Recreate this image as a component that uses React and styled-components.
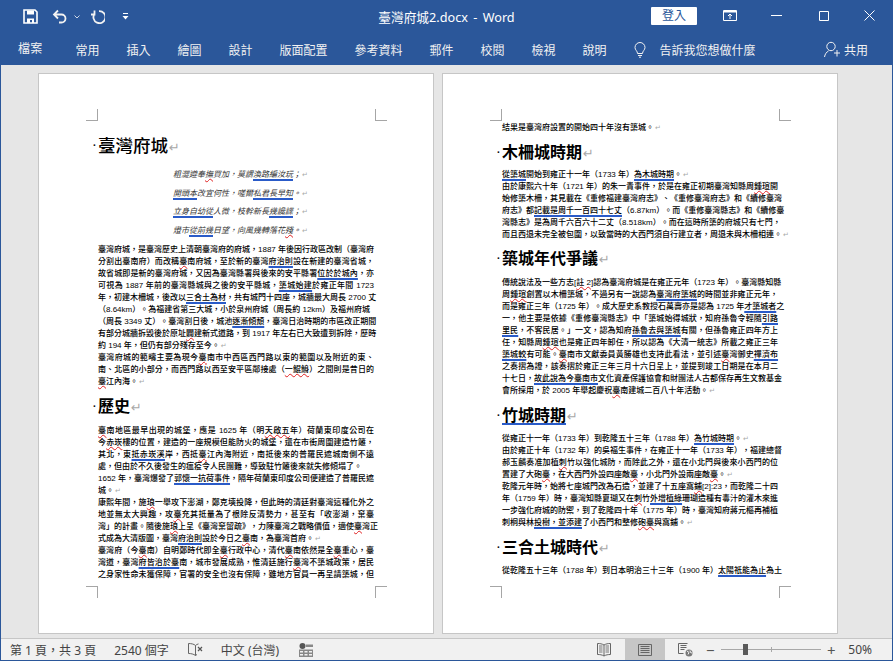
import React from "react";
import styled, { createGlobalStyle } from "styled-components";

const GlobalStyle = createGlobalStyle`
  html, body {
    margin: 0;
    padding: 0;
    height: 100%;
    overflow: hidden;
    background: #e6e6e6;
  }
  * { box-sizing: border-box; }
`;

const Window = styled.div`
  width: 893px;
  height: 661px;
  display: flex;
  flex-direction: column;
  border: 1px solid #2b579a;
  border-top: none;
  font-family: "Noto Sans", "Noto Sans CJK TC", sans-serif;
`;

const TitleBar = styled.div`
  height: 33px;
  background: #2b579a;
  color: #fff;
  display: grid;
  grid-template-columns: 1fr auto 1fr;
  align-items: center;
  margin: 0 -1px 0 -1px;
  padding: 0 1px;
`;

const QuickAccess = styled.div`
  display: flex;
  align-items: center;
  padding-left: 22px;
`;

const QuickIcon = styled.svg`
  display: block;
  flex: none;
  margin-left: ${(p) => p.$gap || 0}px;
`;

const DocTitle = styled.div`
  font-size: 12.7px;
  word-spacing: 2px;
  white-space: pre;
`;

const WindowControls = styled.div`
  display: flex;
  align-items: center;
  justify-content: flex-end;
`;

const SignIn = styled.div`
  width: 46px;
  height: 18px;
  margin: 0 9px 1px 0;
  background: #fff;
  color: #2b579a;
  border-radius: 1px;
  font-size: 12px;
  line-height: 18px;
  text-align: center;
`;

const ControlButton = styled.div`
  width: ${(p) => p.$w || 47}px;
  height: 33px;
  display: flex;
  align-items: center;
  justify-content: center;
  padding-bottom: 2px;
`;

const TabBar = styled.div`
  height: 32px;
  background: #2b579a;
  color: #f2f2f2;
  display: flex;
  align-items: center;
  gap: 27px;
  font-size: 12px;
  margin: 0 -1px;
  padding: 1px 25px 0 18px;
`;

const Tab = styled.div`
  white-space: nowrap;
  margin-right: ${(p) => (p.$file ? 6 : 0)}px;
  margin-top: ${(p) => (p.$file ? -3 : 0)}px;
  letter-spacing: ${(p) => (p.$file ? 0.2 : 0)}px;
`;

const TellMe = styled.div`
  display: flex;
  align-items: center;
  gap: 14px;
  white-space: nowrap;
`;

const Share = styled.div`
  margin-left: auto;
  display: flex;
  align-items: center;
  gap: 4px;
`;

const DocArea = styled.div`
  flex: 1;
  min-height: 0;
  background: #e6e6e6;
  display: flex;
  gap: 8px;
  padding: 8px 0 4px 37px;
  border-bottom: 1px solid #c6c6c6;
`;

const Page = styled.div`
  position: relative;
  width: 396px;
  height: 100%;
  background: #fff;
  border: 1px solid #c6c6c6;
  padding: ${(p) => p.$top}px 0 0 ${(p) => p.$left}px;
`;

const Corner = styled.i`
  position: absolute;
  width: 12px;
  height: 12px;
  ${(p) => (p.$right ? "left: 336px; border-left: 1px solid #a6a6a6;" : "left: 47px; border-right: 1px solid #a6a6a6;")}
  ${(p) =>
    p.$bottom
      ? "top: 512px; border-top: 1px solid #a6a6a6;"
      : "top: 35px; border-bottom: 1px solid #a6a6a6;"}
`;

const Heading = styled.div`
  position: relative;
  height: 24px;
  line-height: 24px;
  margin: ${(p) => p.$mt || 0}px 0 ${(p) => p.$mb || 0}px;
  font-size: ${(p) => (p.$main ? 17.5 : 16)}px;
  font-weight: ${(p) => (p.$main ? 500 : 700)};
  color: #000;
  white-space: nowrap;

  &::before {
    content: "·";
    position: absolute;
    left: -5px;
    font-size: 10px;
    font-weight: 700;
  }
`;

const PoemLine = styled.div`
  height: 18.67px;
  line-height: 18.67px;
  font-size: 8px;
  font-style: italic;
  color: #333;
  white-space: nowrap;
  padding-left: 75px;
  font-family: "Liberation Sans", "Noto Sans CJK TC", sans-serif;
`;

const Line = styled.div`
  width: 276px;
  height: 12px;
  line-height: 12px;
  font-size: 8px;
  font-weight: 500;
  color: #000;
  white-space: nowrap;
  text-align: ${(p) => (p.$end ? "left" : "justify")};
  text-align-last: ${(p) => (p.$end ? "left" : "justify")};
  font-family: "Liberation Sans", "Noto Sans CJK TC", sans-serif;
`;

const Err = styled.span`
  text-decoration: underline wavy #e02020 1px;
  text-underline-offset: 1px;
`;

const Gram = styled.span`
  text-decoration: underline solid #2a5bc8 1.5px;
  text-underline-offset: 1.5px;
`;

const Mark = styled.span`
  color: #a8a8a8;
  font-size: ${(p) => p.$size || 7}px;
  font-family: "DejaVu Sans", sans-serif;
  font-weight: 400;
  margin-left: 1px;
`;

const Gap = styled.div`
  height: ${(p) => p.$h}px;
`;

const StatusBar = styled.div`
  height: 21px;
  background: #f1f1f1;
  display: flex;
  align-items: center;
  color: #444;
  font-size: 12px;
`;

const StatusText = styled.div`
  white-space: pre;
  margin-left: ${(p) => p.$ml}px;
`;

const StatusIcon = styled.svg`
  display: block;
  flex: none;
  margin-left: ${(p) => p.$ml || 0}px;
`;

const ViewGroup = styled.div`
  margin-left: auto;
  display: flex;
  align-items: center;
  height: 100%;
  padding-right: 20px;
`;

const ViewButton = styled.div`
  width: ${(p) => p.$w}px;
  height: 100%;
  display: flex;
  align-items: center;
  justify-content: center;
  background: ${(p) => (p.$on ? "#c6c6c6" : "transparent")};
`;

const ZoomTrack = styled.div`
  position: relative;
  width: 100px;
  height: 1px;
  background: #a8a8a8;
  margin: 0 5px 0 6px;
`;

const ZoomTick = styled.i`
  position: absolute;
  left: 50px;
  top: -2px;
  width: 1px;
  height: 5px;
  background: #a8a8a8;
`;

const ZoomThumb = styled.i`
  position: absolute;
  left: 22px;
  top: -5px;
  width: 5px;
  height: 11px;
  background: #5a5a5a;
`;

const ZoomSign = styled.div`
  width: 10px;
  font-size: 15px;
  line-height: 14px;
  text-align: center;
  color: #555;
`;

const ZoomValue = styled.div`
  margin-left: 12px;
  color: #444;
`;

const App = () => {
  return (
    <>
      <GlobalStyle />
      <Window>
        <TitleBar>
          <QuickAccess>
            <QuickIcon width="15" height="15" viewBox="0 0 15 15" fill="none">
              <path d="M1 1h11l2 2v11H1z" stroke="#fff" strokeWidth="1.6" />
              <path d="M4 1.5h7v4H4z" fill="#fff" />
              <path d="M4 9.5h7V14H9v-3H7v3H4z" fill="#fff" />
            </QuickIcon>
            <QuickIcon $gap={14} width="16" height="16" viewBox="0 0 16 16" fill="none">
              <path d="M6 1.5L2 5.5l4 4M2 5.5h7.5a4 4 0 0 1 0 8H7" stroke="#f2f2f2" strokeWidth="1.8" />
            </QuickIcon>
            <QuickIcon $gap={6} width="6" height="4" viewBox="0 0 6 4" fill="none">
              <path d="M.5.5L3 3 5.500.5" stroke="#cfd8e6" />
            </QuickIcon>
            <QuickIcon $gap={10} width="15" height="15" viewBox="0 0 15 15" fill="none">
              <path d="M4 1.500v4H0.500M4.200 4.500A6 6 0 1 0 8.500 2.200" stroke="#f2f2f2" strokeWidth="1.8" transform="translate(.5 0)" />
            </QuickIcon>
            <QuickIcon $gap={17} width="7" height="7" viewBox="0 0 7 7">
              <path d="M1 0h5v1H1zM.5 3h6L3.500 6.500z" fill="#fff" />
            </QuickIcon>
          </QuickAccess>
          <DocTitle>臺灣府城2.docx - Word</DocTitle>
          <WindowControls>
            <SignIn>登入</SignIn>
            <ControlButton>
              <svg width="14" height="11" viewBox="0 0 14 11" fill="none">
                <path d="M.5.5h13v10H.5z" stroke="#fff" />
                <path d="M1 1h12v1.500H1z" fill="#fff" />
                <path d="M7 9V4.500M5 6l2-2 2 2" stroke="#fff" />
              </svg>
            </ControlButton>
            <ControlButton>
              <svg width="11" height="1" viewBox="0 0 11 1">
                <path d="M0 0h11v1H0z" fill="#fff" />
              </svg>
            </ControlButton>
            <ControlButton>
              <svg width="10" height="10" viewBox="0 0 10 10" fill="none">
                <path d="M.5.5h9v9h-9z" stroke="#fff" />
              </svg>
            </ControlButton>
            <ControlButton $w={45}>
              <svg width="11" height="11" viewBox="0 0 11 11" fill="none">
                <path d="M.5.5l10 10M10.500.5l-10 10" stroke="#fff" />
              </svg>
            </ControlButton>
          </WindowControls>
        </TitleBar>

        <TabBar>
          <Tab $file>檔案</Tab>
          <Tab>常用</Tab>
          <Tab>插入</Tab>
          <Tab>繪圖</Tab>
          <Tab>設計</Tab>
          <Tab>版面配置</Tab>
          <Tab>參考資料</Tab>
          <Tab>郵件</Tab>
          <Tab>校閱</Tab>
          <Tab>檢視</Tab>
          <Tab>說明</Tab>
          <TellMe>
            <svg width="12" height="16" viewBox="0 0 12 16" fill="none">
              <path d="M3.500 11.500C3.500 9 1 8 1 5.500a5 5 0 0 1 10 0C11 8 8.500 9 8.500 11.500zM4 13.500h4M5 15.200h2" stroke="#f2f2f2" />
            </svg>
            告訴我您想做什麼
          </TellMe>
          <Share>
            <svg width="16" height="17" viewBox="0 0 16 17" fill="none">
              <circle cx="7" cy="5.500" r="4.200" stroke="#f2f2f2" />
              <path d="M.5 16c.5-3 2-5 4-6M10 12h6M13 9v6.500" stroke="#f2f2f2" />
            </svg>
            共用
          </Share>
        </TabBar>

        <DocArea>
          <Page $top={59} $left={59}>
            <Corner />
            <Corner $right />
            <Corner $bottom />
            <Corner $bottom $right />
            <Heading $main $mb={9}>臺灣府城<Mark $size={13}>↵</Mark></Heading>
            <PoemLine>粗澀遵奉<Err>撫</Err>買加，莫謂<Gram>渙路編汝玩</Gram>；<Mark>↵</Mark></PoemLine>
            <PoemLine><Gram>開頭本</Gram>改宜何性，嗟爾<Gram>私君長早知</Gram>。<Mark>↵</Mark></PoemLine>
            <PoemLine><Gram>立身自幼從</Gram>人微，枝幹新長<Gram>幾讒諜</Gram>；<Mark>↵</Mark></PoemLine>
            <PoemLine>燈市<Gram>從前幾</Gram>日望，向風幾轉落花<Err>殘</Err>。<Mark>↵</Mark></PoemLine>
            <Gap $h={3.5} />
            <Line>臺灣府城，是臺灣歷史上清朝臺灣府的府城，1887 年後因行政區改制（臺灣府</Line>
            <Line>分割出臺南府）而改稱<Err>臺</Err>南府城，至於新的臺灣<Gram>府治則</Gram>設在新建的臺灣省城，</Line>
            <Line>故省城即是新的臺灣府城，又因為臺灣縣署與後來的安平縣署<Gram>位於於城內</Gram>，亦</Line>
            <Line>可視為 1887 年前的臺灣縣城與之後的安平縣城，<Gram>築城始建</Gram>於雍正年間 1723</Line>
            <Line>年，初建木柵城，後改以<Gram>三合土為材</Gram>，共有城門十四座，城牆最大周長 2700 丈</Line>
            <Line $end>（8.64km）。為福建省第三大城，小於泉州府城（周長約 12km）及福州府城</Line>
            <Line>（周長 3349 丈）。臺灣割日後，城池<Gram>逐漸傾頹</Gram>，臺灣日治時期的市區改正期間</Line>
            <Line>有部分城牆拆毀後於原址<Err>闢</Err>建新式道路，到 1917 年左右已大致遭到拆除，歷時</Line>
            <Line $end>約 194 年，但仍有部分殘存至今。<Mark>↵</Mark></Line>
            <Line>臺灣府城的範疇主要為現今<Err>臺</Err>南市中西區西門路以東的範圍以及附近的東、</Line>
            <Line>南、北區的小部分，而西門路以西至安平區鄰接處（<Err>一鯤鯓</Err>）之間則是昔日的</Line>
            <Line $end><Err>臺</Err>江內海。<Mark>↵</Mark></Line>
            <Heading $mt={6} $mb={7}>歷史<Mark $size={13}>↵</Mark></Heading>
            <Line><Err>臺</Err>南地區最早出現的城堡，應是 1625 年（明<Err>天啟五</Err>年）荷蘭東印度公司在</Line>
            <Line>今<Err>赤崁</Err>樓的位置，建造的一座規模但能防火的城堡，還在市街周圍建造竹籬，</Line>
            <Line>其北，東<Gram>抵赤崁溪</Gram>岸，西抵<Err>臺</Err>江內海附近，南抵後來的普羅民遮城南側不遠</Line>
            <Line $end>處，但由於不久後發生的瘟疫令人民團難，導致駐竹籬後來就失修傾塌了。</Line>
            <Line>1652 年，臺灣爆發了<Gram>郭懷一抗荷事件</Gram>，隔年荷蘭東印度公司便建造了普羅民遮</Line>
            <Line $end>城。<Mark>↵</Mark></Line>
            <Line>康熙年間，施<Err>琅</Err>一舉攻下澎湖，鄭克塽投降，但此時的清廷對臺灣這種化外之</Line>
            <Line>地並無太大興趣，攻<Err>臺</Err>充其抵量為了根除反清勢力，甚至有「收澎湖，棄臺</Line>
            <Line>灣」的計畫。隨後施<Err>琅</Err>上呈《臺灣棄留疏》，力陳臺灣之戰略價值，適使<Err>臺</Err>灣正</Line>
            <Line $end>式成為大清版圖，臺灣<Gram>府治則</Gram>設於今日之<Err>臺</Err>南，為臺灣首府。<Mark>↵</Mark></Line>
            <Line>臺灣府（今<Err>臺</Err>南）自明鄭時代即全<Err>臺</Err>行政中心，清代<Err>臺</Err>南依然是全<Err>臺</Err>重心，臺</Line>
            <Line>灣道，臺灣<Gram>府皆治於臺</Gram>南，城市發展成熟，惟清廷施行<Err>臺</Err>灣不築城政策，居民</Line>
            <Line>之身家性命未獲保障，官署的安全也沒有保障，雖地方官員一再呈請築城，但</Line>
          </Page>

          <Page $top={48} $left={59}>
            <Corner />
            <Corner $right />
            <Corner $bottom />
            <Corner $bottom $right />
            <Line $end>結果是臺灣府設置的開始四十年沒有築城。<Mark>↵</Mark></Line>
            <Heading $mt={6} $mb={5}>木柵城時期<Mark $size={13}>↵</Mark></Heading>
            <Line $end><Gram>從築城</Gram>開始到雍正十一年（1733 年）<Gram>為木城時期</Gram>。<Mark>↵</Mark></Line>
            <Line>由於康熙六十年（1721 年）的朱一貴事件，於是在雍正初期臺灣知縣周<Err>鍾瑄</Err>開</Line>
            <Line>始修築木柵，其見載在《重修福建臺灣府志》、《重修臺灣府志》和《續修臺灣</Line>
            <Line>府志》都<Gram>記載是周千一百四十七丈</Gram>（6.87km）。而《重修臺灣縣志》和《續修臺</Line>
            <Line>灣縣志》是為周千六百六十二丈（8.518km）。而在這時所築的府城只有七門，</Line>
            <Line $end>而且西退未完全被包圍，以致當時的大西門須自行建立者，周退未與木柵相連。<Mark>↵</Mark></Line>
            <Heading $mt={5} $mb={7}>築城年代爭議<Mark $size={13}>↵</Mark></Heading>
            <Line>傳統說法及一些方志[<Err>註 2</Err>]認為臺灣府城是在雍正元年（1723 年）。臺灣縣知縣</Line>
            <Line>周<Err>鍾瑄</Err>創置以木柵築城，不過另有一說認為<Gram>臺灣府築城</Gram>的時間並非雍正元年，</Line>
            <Line>而是雍正三年（1725 年）。成大歷史系教授石萬壽亦是認為 1725 年<Gram>才築城者</Gram>之</Line>
            <Line>一，他主要是依據《重修臺灣縣志》中「築城始得城狀，知府孫魯令輕隨<Gram>引路</Gram></Line>
            <Line><Gram>里民</Gram>，不客民居。」一文，認為知府<Gram>孫魯去與築城</Gram>有關，但孫魯雍正四年方上</Line>
            <Line>任，知縣周<Err>鍾瑄</Err>也是雍正四年卸任，所以認為《大清一統志》所載之雍正三年</Line>
            <Line><Gram>築城較</Gram>有可能。<Err>臺</Err>南市文獻委員黃勝雄也支持此看法，並引述<Err>臺</Err>灣御史<Gram>禪濟布</Gram></Line>
            <Line>之奏摺為證，該奏摺於雍正三年三月十六日呈上，並提到竣工日期是在本月二</Line>
            <Line>十七日，<Gram>故此說為今臺南市</Gram>文化資產保護協會和財團法人古都保存再生文教基金</Line>
            <Line $end>會所採用，於 2005 年舉起慶祝<Err>臺</Err>南建城二百八十年活動。<Mark>↵</Mark></Line>
            <Heading $mt={6} $mb={6}><Gram>竹城時期</Gram><Mark $size={13}>↵</Mark></Heading>
            <Line $end>從雍正十一年（1733 年）到乾隆五十三年（1788 年）<Gram>為竹城時期</Gram>。<Mark>↵</Mark></Line>
            <Line>由於雍正十年（1732 年）的吳福生事件，在雍正十一年（1733 年），福建總督</Line>
            <Line>郝玉麟奏准加植<Err>刺</Err>竹以強化城防，而除此之外，還在小北門與後來小西門的位</Line>
            <Line $end>置建了大砲<Err>臺</Err>，在大西門外設四座敵<Err>臺</Err>，小北門外設兩座敵<Err>臺</Err>。<Mark>↵</Mark></Line>
            <Line>乾隆元年時，始將七座城門改為石造，並建了十五座窩<Err>鋪</Err>[2]:23，而乾隆二十四</Line>
            <Line>年（1759 年）時，臺灣知縣夏瑚又在<Err>刺</Err>竹<Gram>外增植綠</Gram>珊瑚造種有毒汁的灌木來進</Line>
            <Line>一步強化府城的防禦，到了乾隆四十年（1775 年）時，臺灣知府蔣元樞再補植</Line>
            <Line $end>刺桐與林<Gram>投樹，並添建</Gram>了小西門和整修<Err>砲臺</Err>與窩鋪。<Mark>↵</Mark></Line>
            <Heading $mt={6} $mb={6}>三合土城時代<Mark $size={13}>↵</Mark></Heading>
            <Line>從乾隆五十三年（1788 年）到日本明治三十三年（1900 年）<Gram>太陽祇能為止</Gram>為土</Line>
          </Page>
        </DocArea>

        <StatusBar>
          <StatusText $ml={9}>第 1 頁，共 3 頁</StatusText>
          <StatusText $ml={18}>2540 個字</StatusText>
          <StatusIcon $ml={19} width="15" height="14" viewBox="0 0 15 14" fill="none">
            <path d="M7.500 2.500C6 1 3 .5.500.5v10c2.500 0 5 .5 7 2V2.500zM7.500 2.500c.8-.8 1.800-1.300 3-1.600M7.500 12.500l1.500-1" stroke="#666" />
            <path d="M10 4l4 4M14 4l-4 4" stroke="#555" strokeWidth="1.200" />
          </StatusIcon>
          <StatusText $ml={18}>中文 (台灣)</StatusText>
          <StatusIcon $ml={20} width="14" height="14" viewBox="0 0 14 14">
            <circle cx="3.500" cy="3" r="3" fill="#555" />
            <path d="M7 1.500h7v2.500H7zM0 6.500h14V14H0z" fill="#888" />
            <path d="M1 8h3v1.500H1zM5.500 8h3v1.500h-3zM10 8h3v1.500h-3zM1 11h3v1.500H1zM5.500 11h3v1.500h-3zM10 11h3v1.500h-3z" fill="#f1f1f1" />
          </StatusIcon>
          <ViewGroup>
            <ViewButton $w={43}>
              <svg width="14" height="14" viewBox="0 0 14 14" fill="none">
                <path d="M7 2C5 .8 3 .5.500.5v11c2.500 0 4.500.3 6.500 1.500 2-1.200 4-1.500 6.500-1.500V.5C11 .5 9 .8 7 2zM7 2v11" stroke="#666" />
                <path d="M2 3h3.500M2 5h3.500M2 7h3.500M2 9h3.500M8.500 3H12M8.500 5H12M8.500 7H12M8.500 9H12" stroke="#777" />
              </svg>
            </ViewButton>
            <ViewButton $w={40} $on>
              <svg width="14" height="12" viewBox="0 0 14 12" fill="none">
                <path d="M.5.5h13v11H.5z" stroke="#666" />
                <path d="M2.500 2.500h9M2.500 4.500h9M2.500 6.500h9M2.500 8.500h9" stroke="#666" />
              </svg>
            </ViewButton>
            <ViewButton $w={40}>
              <svg width="15" height="14" viewBox="0 0 15 14" fill="none">
                <path d="M.5.5h9M.5.5v10h5M2.500 2.500h6M2.500 4.500h6M2.500 6.500h4" stroke="#666" />
                <circle cx="11" cy="10" r="3.500" fill="#777" />
                <path d="M9 8l2 1.500-1 2M12 7.500l.5 2 1.500.5" stroke="#f1f1f1" />
              </svg>
            </ViewButton>
            <ZoomSign>−</ZoomSign>
            <ZoomTrack>
              <ZoomTick />
              <ZoomThumb />
            </ZoomTrack>
            <ZoomSign>+</ZoomSign>
            <ZoomValue>50%</ZoomValue>
          </ViewGroup>
        </StatusBar>
      </Window>
    </>
  );
};

export default App;
